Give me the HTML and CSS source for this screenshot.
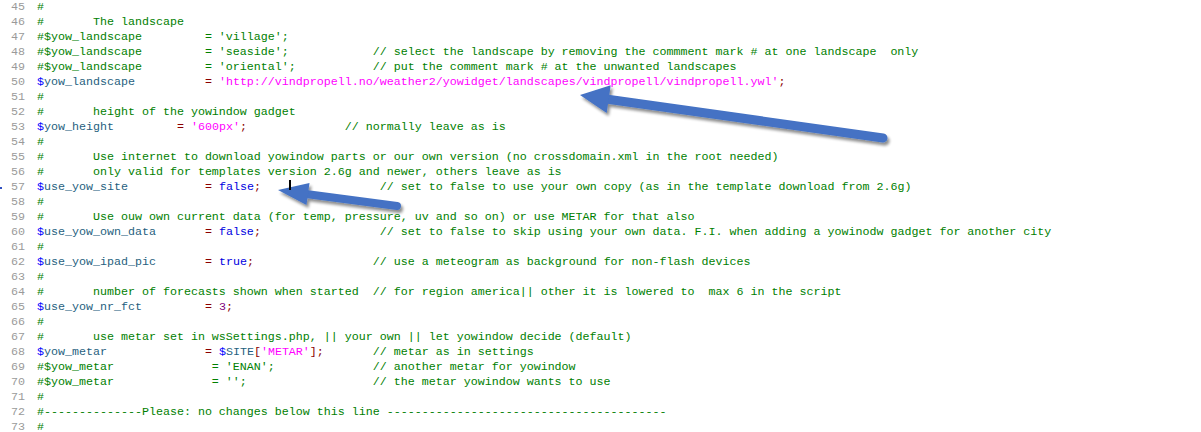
FILE: index.html
```html
<!DOCTYPE html>
<html>
<head>
<meta charset="utf-8">
<link rel="stylesheet" href="styles.css">
</head>
<body>
<div class="editor">
<div class="line"><span class="ln">45</span><span class="cm">#</span></div>
<div class="line"><span class="ln">46</span><span class="cm">#       The landscape</span></div>
<div class="line"><span class="ln">47</span><span class="cm">#$yow_landscape         = 'village';</span></div>
<div class="line"><span class="ln">48</span><span class="cm">#$yow_landscape         = 'seaside';            // select the landscape by removing the commment mark # at one landscape  only</span></div>
<div class="line"><span class="ln">49</span><span class="cm">#$yow_landscape         = 'oriental';           // put the comment mark # at the unwanted landscapes</span></div>
<div class="line"><span class="ln">50</span><span><span class="dl">$</span><span class="vr">yow_landscape</span>          <span class="op">=</span> <span class="st">'http://vindpropell.no/weather2/yowidget/landscapes/vindpropell/vindpropell.ywl'</span><span class="op">;</span></span></div>
<div class="line"><span class="ln">51</span><span class="cm">#</span></div>
<div class="line"><span class="ln">52</span><span class="cm">#       height of the yowindow gadget</span></div>
<div class="line"><span class="ln">53</span><span><span class="dl">$</span><span class="vr">yow_height</span>         <span class="op">=</span> <span class="st">'600px'</span><span class="op">;</span>              <span class="cm">// normally leave as is</span></span></div>
<div class="line"><span class="ln">54</span><span class="cm">#</span></div>
<div class="line"><span class="ln">55</span><span class="cm">#       Use internet to download yowindow parts or our own version (no crossdomain.xml in the root needed)</span></div>
<div class="line"><span class="ln">56</span><span class="cm">#       only valid for templates version 2.6g and newer, others leave as is</span></div>
<div class="line"><span class="ln">57</span><span><span class="dl">$</span><span class="vr">use_yow_site</span>           <span class="op">=</span> <span class="kw">false</span><span class="op">;</span>                 <span class="cm">// set to false to use your own copy (as in the template download from 2.6g)</span></span></div>
<div class="line"><span class="ln">58</span><span class="cm">#</span></div>
<div class="line"><span class="ln">59</span><span class="cm">#       Use ouw own current data (for temp, pressure, uv and so on) or use METAR for that also</span></div>
<div class="line"><span class="ln">60</span><span><span class="dl">$</span><span class="vr">use_yow_own_data</span>       <span class="op">=</span> <span class="kw">false</span><span class="op">;</span>                 <span class="cm">// set to false to skip using your own data. F.I. when adding a yowinodw gadget for another city</span></span></div>
<div class="line"><span class="ln">61</span><span class="cm">#</span></div>
<div class="line"><span class="ln">62</span><span><span class="dl">$</span><span class="vr">use_yow_ipad_pic</span>       <span class="op">=</span> <span class="kw">true</span><span class="op">;</span>                 <span class="cm">// use a meteogram as background for non-flash devices</span></span></div>
<div class="line"><span class="ln">63</span><span class="cm">#</span></div>
<div class="line"><span class="ln">64</span><span class="cm">#       number of forecasts shown when started  // for region america|| other it is lowered to  max 6 in the script</span></div>
<div class="line"><span class="ln">65</span><span><span class="dl">$</span><span class="vr">use_yow_nr_fct</span>         <span class="op">=</span> <span class="nm">3</span><span class="op">;</span></span></div>
<div class="line"><span class="ln">66</span><span class="cm">#</span></div>
<div class="line"><span class="ln">67</span><span class="cm">#       use metar set in wsSettings.php, || your own || let yowindow decide (default)</span></div>
<div class="line"><span class="ln">68</span><span><span class="dl">$</span><span class="vr">yow_metar</span>              <span class="op">=</span> <span class="dl">$</span><span class="vr">SITE</span><span class="op">[</span><span class="st">'METAR'</span><span class="op">];</span>       <span class="cm">// metar as in settings</span></span></div>
<div class="line"><span class="ln">69</span><span class="cm">#$yow_metar              = 'ENAN';              // another metar for yowindow</span></div>
<div class="line"><span class="ln">70</span><span class="cm">#$yow_metar              = '';                  // the metar yowindow wants to use</span></div>
<div class="line"><span class="ln">71</span><span class="cm">#</span></div>
<div class="line"><span class="ln">72</span><span class="cm">#--------------Please: no changes below this line ----------------------------------------</span></div>
<div class="line"><span class="ln">73</span><span class="cm">#</span></div>
</div>
<svg class="overlay" width="1201" height="432" viewBox="0 0 1201 432">
  <defs>
    <filter id="sh" x="-10%" y="-50%" width="120%" height="200%">
      <feGaussianBlur in="SourceAlpha" stdDeviation="1.6"/>
      <feOffset dx="2" dy="3" result="b"/>
      <feComponentTransfer><feFuncA type="linear" slope="0.45"/></feComponentTransfer>
      <feMerge><feMergeNode/><feMergeNode in="SourceGraphic"/></feMerge>
    </filter>
  </defs>
  <g filter="url(#sh)" fill="#4472c4" stroke="#4472c4">
    <line x1="883" y1="138" x2="606" y2="99" stroke-width="9" stroke-linecap="round"/>
    <polygon points="580,95 610.7,85.2 606.7,113" stroke="none"/>
    <line x1="397" y1="206" x2="306" y2="194" stroke-width="8" stroke-linecap="round"/>
    <polygon points="278,190 309.5,183.1 306.5,204.9" stroke="none"/>
  </g>
  <rect x="289" y="180" width="2" height="10" fill="#000"/>
  <rect x="0" y="187" width="2" height="2" fill="#3050c0"/>
</svg>
</body>
</html>
```
FILE: styles.css
```css
html, body {
  margin: 0;
  padding: 0;
  background: #ffffff;
}
body {
  width: 1201px;
  height: 432px;
  overflow: hidden;
  position: relative;
}
.editor {
  font-family: "Liberation Mono", "Courier New", monospace;
  font-size: 11.667px;
  display: flex;
  flex-direction: column;
}
.line {
  display: grid;
  grid-template-columns: 25px 1fr;
  column-gap: 12px;
  height: 15px;
  line-height: 15px;
  white-space: pre;
}
.ln {
  color: #9a9a9a;
  text-align: right;
}
.cm { color: #008000; }
.dl { color: #0000ff; }
.vr { color: #1f5f80; }
.op { color: #8b0000; }
.st { color: #ff00ff; }
.kw { color: #0000e0; }
.nm { color: #800080; }
.overlay {
  position: absolute;
  left: 0;
  top: 0;
  pointer-events: none;
}
```
